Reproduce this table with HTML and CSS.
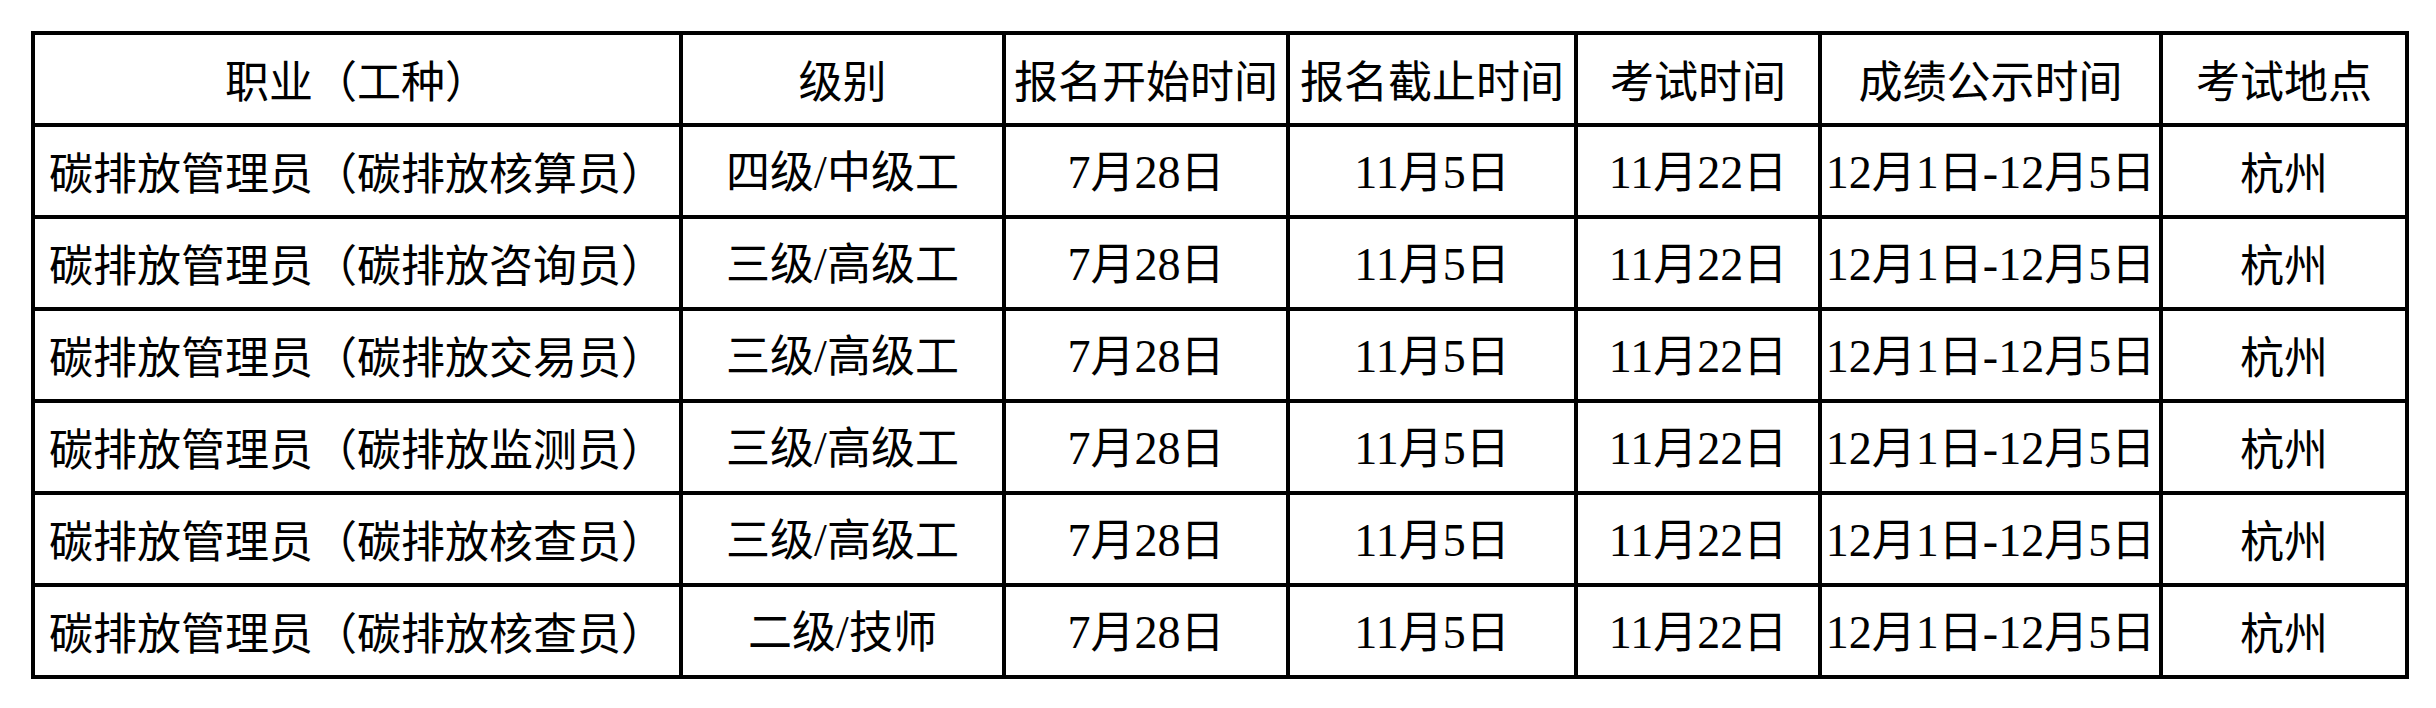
FILE: index.html
```html
<!DOCTYPE html>
<html lang="en">
<head>
<meta charset="utf-8">
<title>考试安排</title>
<link rel="stylesheet" href="styles.css">
</head>
<body>
<table class="sched">
<colgroup>
<col class="c1"><col class="c2"><col class="c3"><col class="c4"><col class="c5"><col class="c6"><col class="c7">
</colgroup>
<tr><td>职业（工种）</td><td>级别</td><td>报名开始时间</td><td>报名截止时间</td><td>考试时间</td><td>成绩公示时间</td><td>考试地点</td></tr>
<tr><td>碳排放管理员（碳排放核算员）</td><td>四级<span class="n">/</span>中级工</td><td><span class="n">7</span>月<span class="n">28</span>日</td><td><span class="n">11</span>月<span class="n">5</span>日</td><td><span class="n">11</span>月<span class="n">22</span>日</td><td><span class="n">12</span>月<span class="n">1</span>日<span class="n">-12</span>月<span class="n">5</span>日</td><td>杭州</td></tr>
<tr><td>碳排放管理员（碳排放咨询员）</td><td>三级<span class="n">/</span>高级工</td><td><span class="n">7</span>月<span class="n">28</span>日</td><td><span class="n">11</span>月<span class="n">5</span>日</td><td><span class="n">11</span>月<span class="n">22</span>日</td><td><span class="n">12</span>月<span class="n">1</span>日<span class="n">-12</span>月<span class="n">5</span>日</td><td>杭州</td></tr>
<tr><td>碳排放管理员（碳排放交易员）</td><td>三级<span class="n">/</span>高级工</td><td><span class="n">7</span>月<span class="n">28</span>日</td><td><span class="n">11</span>月<span class="n">5</span>日</td><td><span class="n">11</span>月<span class="n">22</span>日</td><td><span class="n">12</span>月<span class="n">1</span>日<span class="n">-12</span>月<span class="n">5</span>日</td><td>杭州</td></tr>
<tr><td>碳排放管理员（碳排放监测员）</td><td>三级<span class="n">/</span>高级工</td><td><span class="n">7</span>月<span class="n">28</span>日</td><td><span class="n">11</span>月<span class="n">5</span>日</td><td><span class="n">11</span>月<span class="n">22</span>日</td><td><span class="n">12</span>月<span class="n">1</span>日<span class="n">-12</span>月<span class="n">5</span>日</td><td>杭州</td></tr>
<tr><td>碳排放管理员（碳排放核查员）</td><td>三级<span class="n">/</span>高级工</td><td><span class="n">7</span>月<span class="n">28</span>日</td><td><span class="n">11</span>月<span class="n">5</span>日</td><td><span class="n">11</span>月<span class="n">22</span>日</td><td><span class="n">12</span>月<span class="n">1</span>日<span class="n">-12</span>月<span class="n">5</span>日</td><td>杭州</td></tr>
<tr><td>碳排放管理员（碳排放核查员）</td><td>二级<span class="n">/</span>技师</td><td><span class="n">7</span>月<span class="n">28</span>日</td><td><span class="n">11</span>月<span class="n">5</span>日</td><td><span class="n">11</span>月<span class="n">22</span>日</td><td><span class="n">12</span>月<span class="n">1</span>日<span class="n">-12</span>月<span class="n">5</span>日</td><td>杭州</td></tr>
</table>
</body>
</html>
```
FILE: styles.css
```css
html, body {
  background: #ffffff;
}
body {
  margin: 0;
  padding: 31px 0 0 31px;
  color: #000000;
}
.sched {
  border-collapse: collapse;
  table-layout: fixed;
  width: 2374px;
}
.c1 { width: 648px; }
.c2 { width: 323px; }
.c3 { width: 284px; }
.c4 { width: 288px; }
.c5 { width: 244px; }
.c6 { width: 341px; }
.c7 { width: 246px; }
.sched td {
  border: 4px solid #000000;
  height: 88px;
  padding: 0;
  text-align: center;
  vertical-align: middle;
  font-family: "Noto Sans CJK SC", "Liberation Serif", serif;
  font-size: 44px;
  line-height: 1;
  white-space: nowrap;
  overflow: hidden;
  color: #000000;
}
.n {
  font-family: "Liberation Serif", serif;
  font-size: 46px;
}
```
